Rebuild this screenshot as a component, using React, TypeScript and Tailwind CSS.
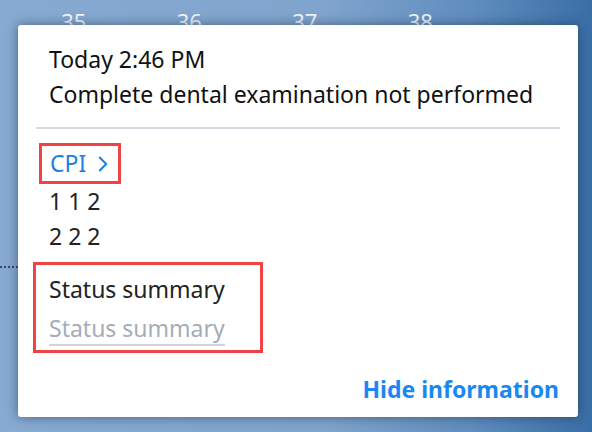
import { ChevronRight } from "lucide-react";

const teeth = ["35", "36", "37", "38"];

export default function App() {
  return (
    <div className="relative h-[432px] w-[592px] overflow-hidden bg-[linear-gradient(to_right,#87aad2_0%,#80a4cd_55%,#5f8dbe_80%,#3a6ea6_100%)] font-['Noto_Sans',sans-serif]">
      {/* tooth numbers behind the popover */}
      <div className="flex pl-[16px] pt-[6px] text-[22px] leading-[30px] text-white/90">
        {teeth.map((t) => (
          <span key={t} className="w-[115.5px] text-center">
            {t}
          </span>
        ))}
      </div>

      <div className="mt-[230px] w-[18px] border-t-2 border-dotted border-[#3a4a5c]" />

      {/* popover */}
      <div className="absolute left-[18px] top-[25px] flex h-[392px] w-[560px] flex-col rounded-[3px] bg-white shadow-[0_0_12px_rgba(20,40,70,0.55)]">
        <div className="pl-[31px] pt-[17px] text-[23px] leading-[35px] text-[#111]">
          <p>Today 2:46 PM</p>
          <p>Complete dental examination not performed</p>
        </div>

        <div className="mx-[18px] mt-[15px] h-[2px] bg-[#d3dae2]" />

        <div className="mt-[14px] pl-[21px] text-[23px] text-[#222]">
          <div className="inline-flex h-[41px] items-center gap-[4px] border-[3px] border-[#f04444] pl-[8px] pr-[2px] text-[#1a7fe2]">
            <span className="leading-[35px]">CPI</span>
            <ChevronRight className="size-[26px]" strokeWidth={1.8} />
          </div>
          <p className="pl-[10px] leading-[35px]">1 1 2</p>
          <p className="pl-[10px] leading-[35px]">2 2 2</p>
        </div>

        <div className="ml-[15px] mt-[8px] w-[230px] border-[3px] border-[#f04444] pb-[4px] pl-[13px] pt-[7px] text-[23px]">
          <p className="leading-[35px] text-[#222]">Status summary</p>
          <span className="mt-[5px] inline-block border-b-2 border-[#cdd4dc] leading-[32px] text-[#a3adb9]">
            Status summary
          </span>
        </div>

        <div className="mt-auto flex justify-end pb-[10px] pr-[19px]">
          <button className="text-[23px] font-bold leading-[35px] text-[#1a88f2]">
            Hide information
          </button>
        </div>
      </div>
    </div>
  );
}
